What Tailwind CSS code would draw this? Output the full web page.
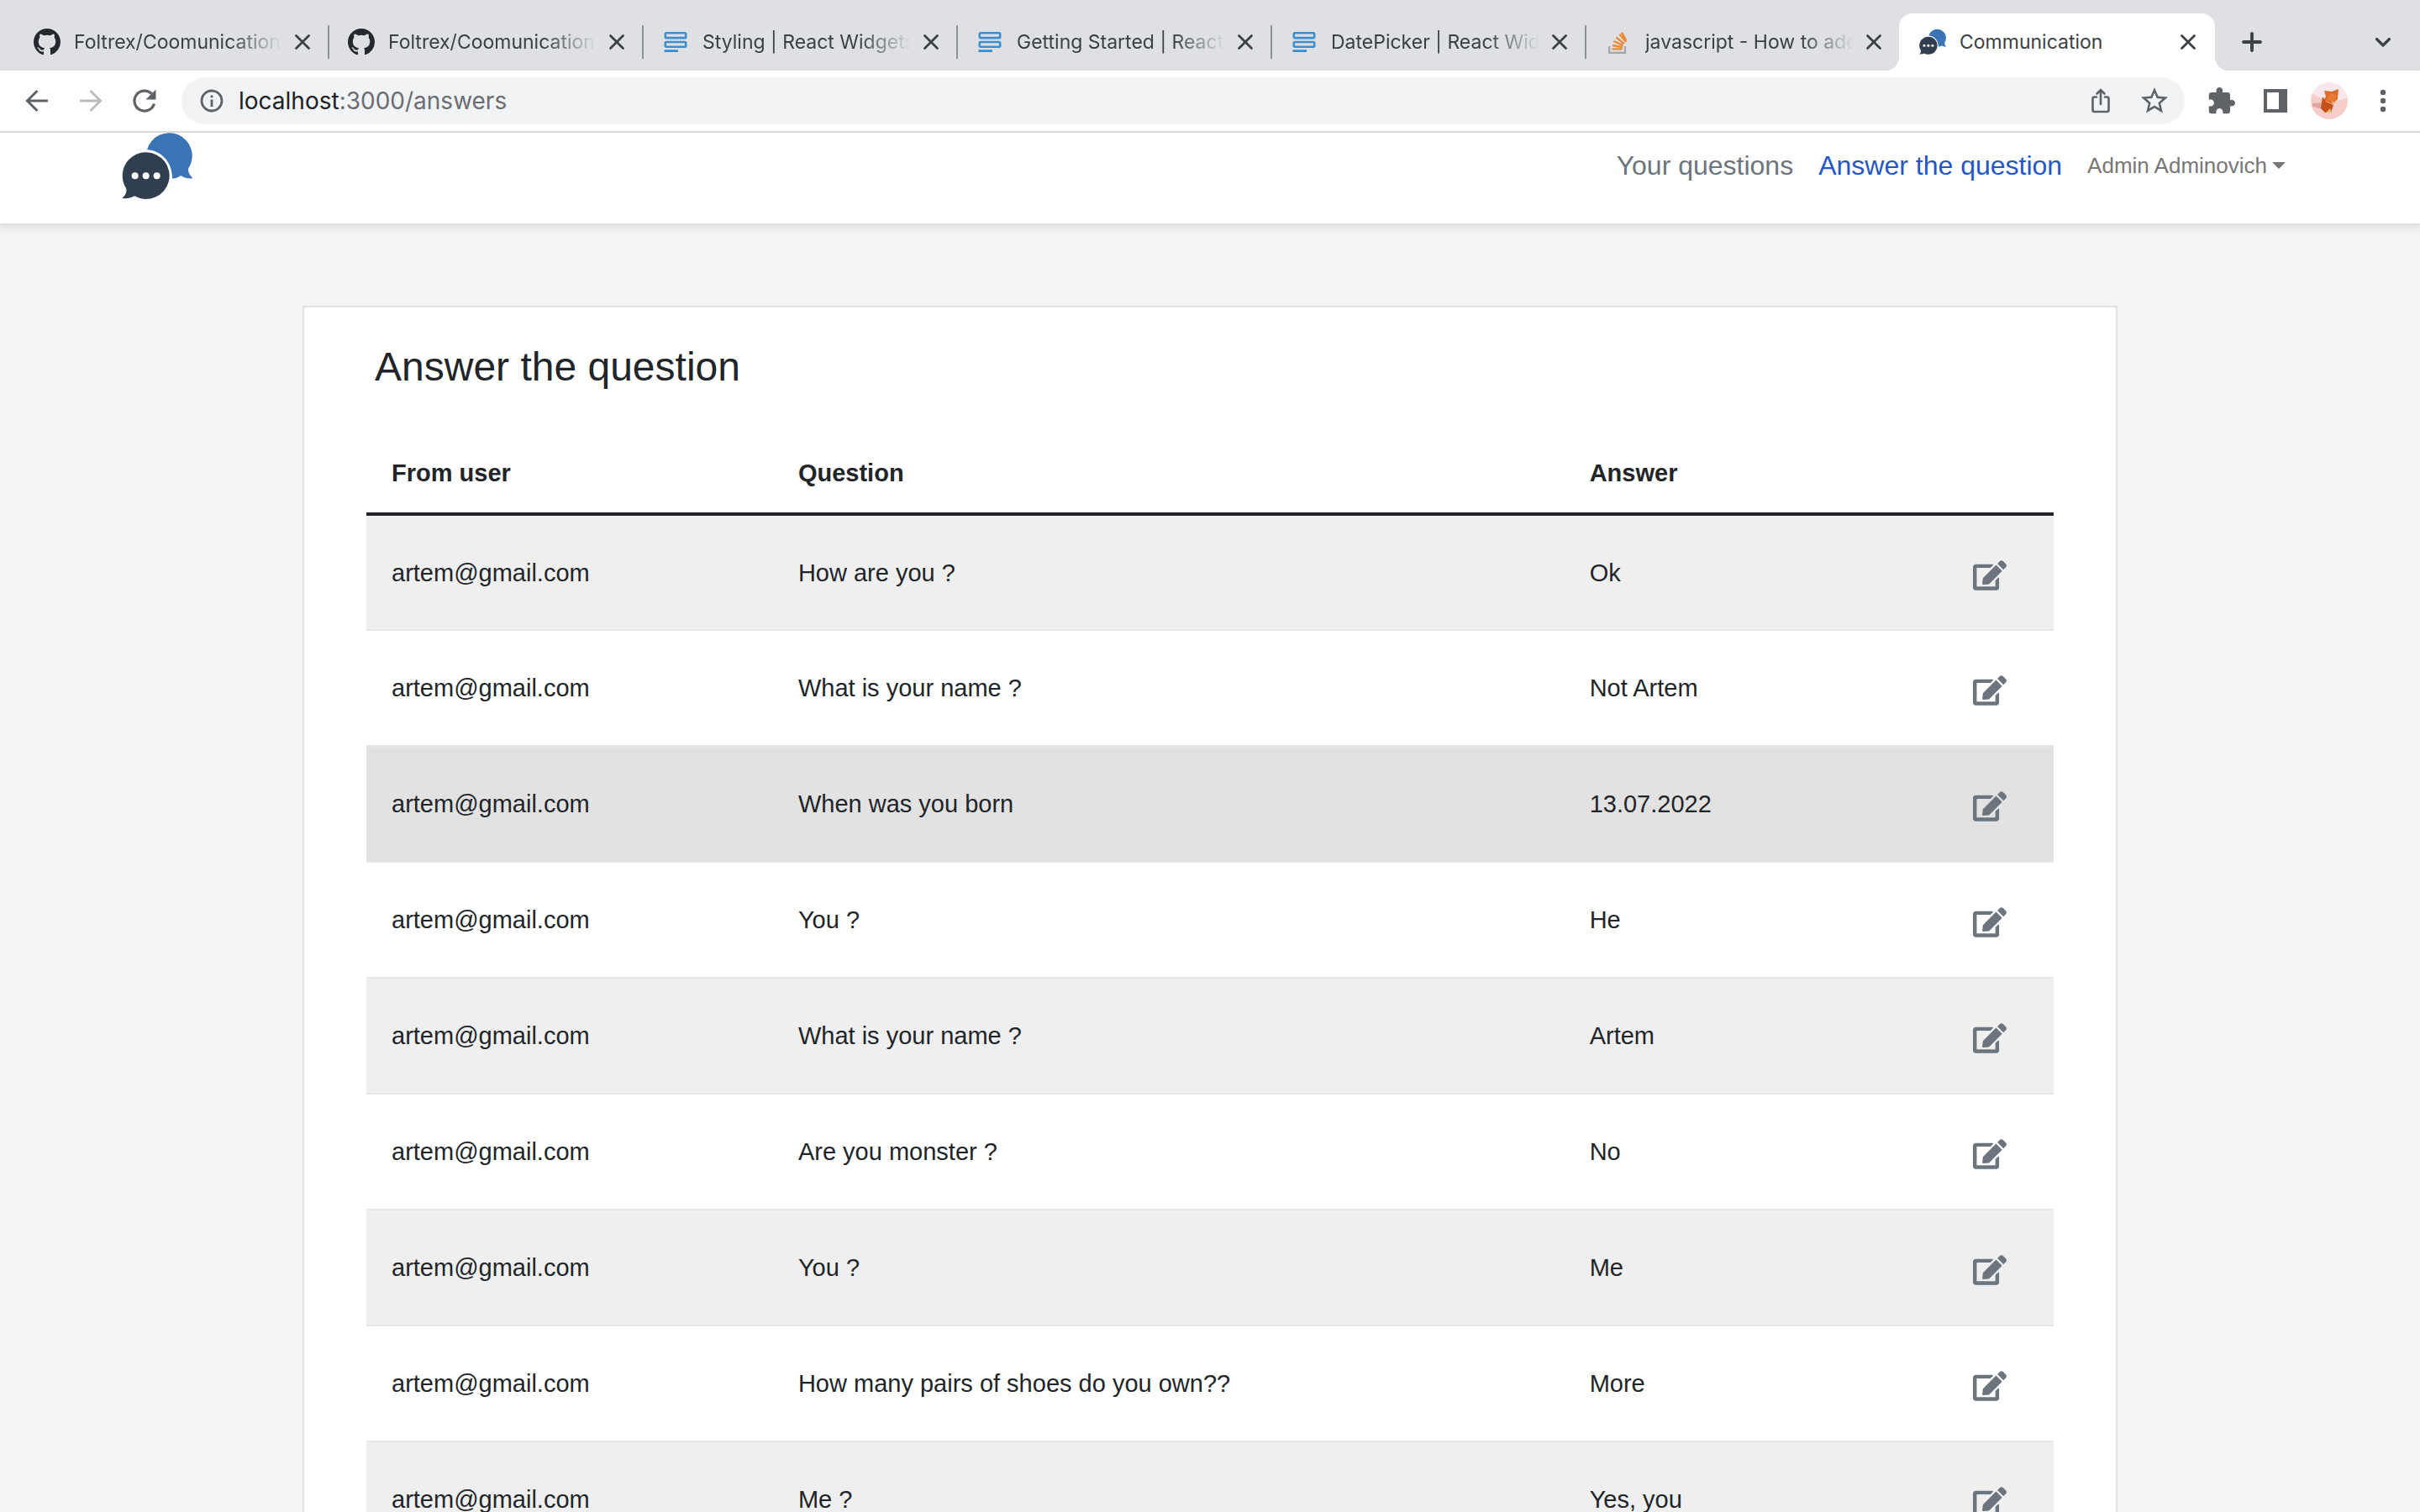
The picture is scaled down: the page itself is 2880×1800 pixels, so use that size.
<!DOCTYPE html>
<html lang="en">
<head>
<meta charset="utf-8">
<title>Communication</title>
<script src="https://cdn.jsdelivr.net/npm/@tailwindcss/browser@4"></script>
</head>
<body class="flex h-screen flex-col overflow-hidden bg-[#f4f4f4] font-['Liberation_Sans',sans-serif] text-[#212529]">

<svg class="hidden" aria-hidden="true">
  <symbol id="github" viewBox="0 0 16 16"><path fill="#24292f" d="M8 0C3.58 0 0 3.58 0 8c0 3.54 2.29 6.53 5.47 7.59.4.07.55-.17.55-.38 0-.19-.01-.82-.01-1.49-2.01.37-2.53-.49-2.69-.94-.09-.23-.48-.94-.82-1.13-.28-.15-.68-.52-.01-.53.63-.01 1.08.58 1.23.82.72 1.21 1.87.87 2.33.66.07-.52.28-.87.51-1.07-1.78-.2-3.64-.89-3.64-3.95 0-.87.31-1.59.82-2.15-.08-.2-.36-1.02.08-2.12 0 0 .67-.21 2.2.82.64-.18 1.32-.27 2-.27s1.36.09 2 .27c1.53-1.04 2.2-.82 2.2-.82.44 1.1.16 1.92.08 2.12.51.56.82 1.27.82 2.15 0 3.07-1.87 3.75-3.65 3.95.29.25.54.73.54 1.48 0 1.07-.01 1.93-.01 2.2 0 .21.15.46.55.38A8.01 8.01 0 0 0 16 8c0-4.42-3.58-8-8-8z"/></symbol>
  <symbol id="widgets" viewBox="0 0 32 32"><g fill="none" stroke="#3f8ecb" stroke-width="2.6"><rect x="3.8" y="5.3" width="24.4" height="5.8" rx="1.2"/><rect x="3.8" y="16" width="24.4" height="5.8" rx="1.2"/></g><path fill="#3f8ecb" d="M2.5 25.2h16.5v2.8H2.500z"/></symbol>
  <symbol id="stack" viewBox="0 0 32 32"><path fill="none" stroke="#a3a6aa" stroke-width="2.2" d="M5.200 21v7.800h18.800V21"/><g stroke="#e98a3a" stroke-width="2.400"><path d="M8.500 24.400h12M9 20l12 2.300M10.500 15l11 5M13.500 10.500l9.300 7.600M17.500 6.700l7.500 9.300M20 4.700l5.500 10"/></g></symbol>
  <symbol id="chat" viewBox="74 23 252 240"><path fill="#3a74b5" d="M164 84A82 82 0 1 1 312 150C309 161 315 174 328 186C312 187 297 185 284 176C274 184 264 187 254 186C255 130 215 86 164 84Z"/><path fill="#313e4f" d="M160 93A83.500 83.500 0 1 1 119 249C106 257 90 259 75 257C88 245 93 233 89 221A83.500 83.500 0 0 1 160 93Z"/><g fill="#fff"><circle cx="121" cy="177" r="12"/><circle cx="160" cy="177" r="12"/><circle cx="199" cy="177" r="12"/></g></symbol>
  <symbol id="close" viewBox="0 0 32 32"><path fill="none" stroke="#3c4043" stroke-width="2.800" stroke-linecap="round" d="M8.500 8.500l15 15m0-15l-15 15"/></symbol>
  <symbol id="edit" viewBox="0 0 576 512"><path fill="#6c757d" d="M402.600 83.200l90.200 90.200c3.800 3.800 3.800 10 0 13.800L274.400 405.600l-92.800 10.300c-12.400 1.400-22.900-9.100-21.500-21.500l10.300-92.800L388.800 83.200c3.800-3.800 10-3.800 13.800 0zm162-22.900l-48.800-48.800c-15.200-15.200-39.900-15.200-55.200 0l-35.400 35.400c-3.800 3.800-3.800 10 0 13.800l90.200 90.200c3.800 3.800 10 3.800 13.800 0l35.400-35.400c15.200-15.300 15.200-40 0-55.200zM384 346.200V448H64V128h229.800c3.200 0 6.200-1.300 8.500-3.500l40-40c7.600-7.600 2.200-20.500-8.500-20.500H48C21.500 64 0 85.500 0 112v352c0 26.500 21.500 48 48 48h352c26.500 0 48-21.500 48-48V306.200c0-10.700-12.900-16-20.500-8.500l-40 40c-2.200 2.300-3.500 5.300-3.500 8.500z"/></symbol>
</svg>

<!-- Tab strip -->
<div class="flex h-[84px] shrink-0 items-end bg-[#dee0e4] pl-4 font-[Inter,sans-serif] text-[23px] leading-8 text-[#3c4043]">
  <div class="flex h-[68px] min-w-0 flex-[0_1_374px] items-center pr-3.5">
    <svg class="ml-6 size-8 shrink-0"><use href="#github"/></svg>
    <span class="ml-4 min-w-0 flex-1 overflow-hidden whitespace-nowrap mask-r-from-75%">Foltrex/Coomunication</span>
    <button class="ml-2 size-8 shrink-0" aria-label="Close tab"><svg class="size-8"><use href="#close"/></svg></button>
  </div>
  <div class="flex h-[68px] min-w-0 flex-[0_1_374px] items-center pr-3.5">
    <span class="h-10 w-0.5 bg-[#8d9094]"></span>
    <svg class="ml-[22px] size-8 shrink-0"><use href="#github"/></svg>
    <span class="ml-4 min-w-0 flex-1 overflow-hidden whitespace-nowrap mask-r-from-75%">Foltrex/Coomunication</span>
    <button class="ml-2 size-8 shrink-0" aria-label="Close tab"><svg class="size-8"><use href="#close"/></svg></button>
  </div>
  <div class="flex h-[68px] min-w-0 flex-[0_1_374px] items-center pr-3.5">
    <span class="h-10 w-0.5 bg-[#8d9094]"></span>
    <svg class="ml-[22px] size-8 shrink-0"><use href="#widgets"/></svg>
    <span class="ml-4 min-w-0 flex-1 overflow-hidden whitespace-nowrap mask-r-from-75%">Styling | React Widgets</span>
    <button class="ml-2 size-8 shrink-0" aria-label="Close tab"><svg class="size-8"><use href="#close"/></svg></button>
  </div>
  <div class="flex h-[68px] min-w-0 flex-[0_1_374px] items-center pr-3.5">
    <span class="h-10 w-0.5 bg-[#8d9094]"></span>
    <svg class="ml-[22px] size-8 shrink-0"><use href="#widgets"/></svg>
    <span class="ml-4 min-w-0 flex-1 overflow-hidden whitespace-nowrap mask-r-from-75%">Getting Started | React</span>
    <button class="ml-2 size-8 shrink-0" aria-label="Close tab"><svg class="size-8"><use href="#close"/></svg></button>
  </div>
  <div class="flex h-[68px] min-w-0 flex-[0_1_374px] items-center pr-3.5">
    <span class="h-10 w-0.5 bg-[#8d9094]"></span>
    <svg class="ml-[22px] size-8 shrink-0"><use href="#widgets"/></svg>
    <span class="ml-4 min-w-0 flex-1 overflow-hidden whitespace-nowrap mask-r-from-75%">DatePicker | React Widgets</span>
    <button class="ml-2 size-8 shrink-0" aria-label="Close tab"><svg class="size-8"><use href="#close"/></svg></button>
  </div>
  <div class="flex h-[68px] min-w-0 flex-[0_1_374px] items-center pr-3.5">
    <span class="h-10 w-0.5 bg-[#8d9094]"></span>
    <svg class="ml-[22px] size-8 shrink-0"><use href="#stack"/></svg>
    <span class="ml-4 min-w-0 flex-1 overflow-hidden whitespace-nowrap mask-r-from-75%">javascript - How to add</span>
    <button class="ml-2 size-8 shrink-0" aria-label="Close tab"><svg class="size-8"><use href="#close"/></svg></button>
  </div>
  <div class="relative flex h-[68px] min-w-0 flex-[0_1_376px] items-center rounded-t-2xl bg-white pr-4">
    <span class="absolute bottom-0 -left-4 size-4 bg-[radial-gradient(circle_at_0_0,transparent_16px,#fff_16px)]"></span>
    <span class="absolute -right-4 bottom-0 size-4 bg-[radial-gradient(circle_at_100%_0,transparent_16px,#fff_16px)]"></span>
    <svg class="ml-6 size-8 shrink-0"><use href="#chat"/></svg>
    <span class="ml-4 min-w-0 flex-1 overflow-hidden whitespace-nowrap">Communication</span>
    <button class="ml-2 size-8 shrink-0" aria-label="Close tab"><svg class="size-8"><use href="#close"/></svg></button>
  </div>
  <button class="mb-[18px] ml-7 size-8 shrink-0" aria-label="New tab"><svg class="size-8" viewBox="0 0 32 32"><path stroke="#3c4043" stroke-width="3.800" stroke-linecap="round" d="M16 6v20M6 16h20"/></svg></button>
  <button class="mr-7 mb-[18px] ml-auto size-8 shrink-0" aria-label="Search tabs"><svg class="size-8" viewBox="0 0 32 32"><path fill="none" stroke="#3c4043" stroke-width="3.200" stroke-linecap="round" stroke-linejoin="round" d="M8.500 12.500L16 20l7.500-7.500"/></svg></button>
</div>

<!-- Toolbar -->
<div class="flex h-[74px] shrink-0 items-center border-b-2 border-[#dadbdd] bg-white pr-7 pl-7">
  <div class="flex gap-8">
    <button class="size-8" aria-label="Back"><svg class="size-8" viewBox="0 0 32 32"><path fill="none" stroke="#5f6368" stroke-width="3" d="M29 16H5M16.500 4L4.500 16l12 12"/></svg></button>
    <button class="size-8" aria-label="Forward"><svg class="size-8" viewBox="0 0 32 32"><path fill="none" stroke="#babcbe" stroke-width="3" d="M3 16h24M15.500 4l12 12-12 12"/></svg></button>
    <button class="size-8" aria-label="Reload"><svg class="size-8" viewBox="0 0 32 32"><path fill="none" stroke="#5f6368" stroke-width="3.200" d="M27.500 19.500A12 12 0 1 1 24.500 7.600"/><path fill="#5f6368" d="M29.500 2.500v12h-12z"/></svg></button>
  </div>
  <div class="ml-7 flex h-14 min-w-0 flex-1 items-center rounded-full bg-[#f1f3f4] pr-5 pl-5">
    <svg class="size-8 shrink-0" viewBox="0 0 32 32"><circle cx="16" cy="16" r="12" fill="none" stroke="#5f6368" stroke-width="2.800"/><path fill="#5f6368" d="M14.600 14.500h2.800V23h-2.800zM14.600 9.500h2.800v2.800h-2.800z"/></svg>
    <a href="#" class="ml-4 flex-1 font-[Inter,sans-serif] text-[28px] leading-10 text-[#6a6d71]"><span class="text-[#202124]">localhost</span>:3000/answers</a>
    <button class="size-8" aria-label="Share"><svg class="size-8" viewBox="0 0 32 32"><path fill="none" stroke="#5f6368" stroke-width="2.600" stroke-linecap="round" d="M11 11.500H8.500a2 2 0 0 0-2 2V27a2 2 0 0 0 2 2h15a2 2 0 0 0 2-2V13.500a2 2 0 0 0-2-2H21M16 20V4M11.500 7.500L16 3l4.500 4.500"/></svg></button>
    <button class="ml-8 size-8" aria-label="Bookmark"><svg class="size-8" viewBox="2 2 20 20"><path fill="#5f6368" d="M22 9.240l-7.190-.62L12 2 9.190 8.630 2 9.240l5.460 4.730L5.820 21 12 17.270 18.180 21l-1.630-7.030L22 9.240zM12 15.400l-3.760 2.270 1-4.280-3.320-2.880 4.380-.38L12 6.100l1.710 4.040 4.380.38-3.320 2.880 1 4.280L12 15.400z"/></svg></button>
  </div>
  <button class="ml-7 size-8" aria-label="Extensions"><svg class="size-8" viewBox="1.500 1 21.500 21.500"><path fill="#5f6368" d="M20.500 11H19V7c0-1.100-.9-2-2-2h-4V3.500C13 2.120 11.880 1 10.500 1S8 2.120 8 3.500V5H4c-1.100 0-1.990.9-1.990 2v3.800H3.500c1.490 0 2.700 1.210 2.700 2.700s-1.210 2.700-2.700 2.700H2V20c0 1.100.9 2 2 2h3.800v-1.500c0-1.490 1.210-2.700 2.700-2.700 1.490 0 2.700 1.210 2.700 2.700V22H17c1.100 0 2-.9 2-2v-4h1.500c1.380 0 2.500-1.120 2.500-2.500S21.880 11 20.500 11z"/></svg></button>
  <button class="ml-8 size-8" aria-label="Side panel"><svg class="size-8" viewBox="0 0 32 32"><path fill="#5f6368" fill-rule="evenodd" d="M2 2h28v28H2zM6 6v20h14V6z"/></svg></button>
  <button class="ml-[26px] size-11" aria-label="Profile"><svg class="size-11" viewBox="0 0 44 44"><defs><clipPath id="face"><circle cx="22" cy="22" r="22"/></clipPath></defs><g clip-path="url(#face)"><path fill="#f7e6ea" d="M0 0h44v44H0z"/><path fill="#f6cdc8" d="M0 13l17 8 10 3 17-6v26H0z"/><path fill="#dfa6a1" d="M2 25l12-1v8L2 29z"/><path fill="#dc6a28" d="M16 10l9 1 8-3-1 12-6 6-11-5 3-4z"/><path fill="#c4501c" d="M14 17l4 6 9 4-3 9-7 0-5-5z"/><path fill="#e57b35" d="M18 21l9 3 5-8-8-3z"/><path fill="#e2bd71" d="M18 36l5-5 2 5zM25 23l3 0-2 4z"/></g></svg></button>
  <button class="ml-[26px] size-8" aria-label="Menu"><svg class="size-8" viewBox="0 0 32 32"><g fill="#5f6368"><circle cx="16" cy="6" r="3.200"/><circle cx="16" cy="16" r="3.200"/><circle cx="16" cy="26" r="3.200"/></g></svg></button>
</div>

<!-- Site header -->
<header class="flex h-[110px] shrink-0 items-start justify-between border-b-2 border-[#dee2e6] bg-white px-[5%] shadow-[0_4px_8px_rgba(0,0,0,0.075)]">
  <a href="#" class="pl-px" aria-label="Home"><svg class="h-20 w-[84px]"><use href="#chat"/></svg></a>
  <nav class="flex items-center gap-[30px] pt-[15px] pr-4 text-[32px] leading-[48px] whitespace-nowrap">
    <a href="#" class="text-[#6c757d]">Your questions</a>
    <a href="#" class="text-[#2457c5]">Answer the question</a>
    <button class="flex items-center gap-1.5 text-[26px] text-[#777]">Admin Adminovich<svg class="h-2 w-4" viewBox="0 0 16 8"><path fill="#777" d="M0 0h16L8 8z"/></svg></button>
  </nav>
</header>

<main class="mx-auto mt-24 w-3/4 grow border-2 border-[#dee2e6] bg-white px-[74px] pt-[42px]">
  <h1 class="pl-2.5 text-[48px] leading-[58px]">Answer the question</h1>
  <table class="mt-[50px] w-full table-fixed border-collapse text-left text-[29px] leading-[44px]">
    <colgroup><col class="w-[24.1%]"><col class="w-[46.9%]"><col class="w-[21%]"><col class="w-[8%]"></colgroup>
    <thead>
      <tr class="h-24 border-b-4 border-[#212529]"><th class="px-[30px]">From user</th><th class="px-[30px]">Question</th><th class="px-[30px]">Answer</th><th></th></tr>
    </thead>
    <tbody>
      <tr class="h-[138px] border-b-2 border-[#e7e7e7] bg-[#efefef]"><td class="px-[30px]">artem@gmail.com</td><td class="px-[30px]">How are you ?</td><td class="px-[30px]">Ok</td><td class="pr-14"><button class="ml-auto block pt-1.5" aria-label="Edit"><svg class="h-9 w-10"><use href="#edit"/></svg></button></td></tr>
      <tr class="h-[138px] border-b-2 border-[#e7e7e7]"><td class="px-[30px]">artem@gmail.com</td><td class="px-[30px]">What is your name ?</td><td class="px-[30px]">Not Artem</td><td class="pr-14"><button class="ml-auto block pt-1.5" aria-label="Edit"><svg class="h-9 w-10"><use href="#edit"/></svg></button></td></tr>
      <tr class="h-[138px] border-b-2 border-[#e7e7e7] bg-[#e2e2e2]"><td class="px-[30px]">artem@gmail.com</td><td class="px-[30px]">When was you born</td><td class="px-[30px]">13.07.2022</td><td class="pr-14"><button class="ml-auto block pt-1.5" aria-label="Edit"><svg class="h-9 w-10"><use href="#edit"/></svg></button></td></tr>
      <tr class="h-[138px] border-b-2 border-[#e7e7e7]"><td class="px-[30px]">artem@gmail.com</td><td class="px-[30px]">You ?</td><td class="px-[30px]">He</td><td class="pr-14"><button class="ml-auto block pt-1.5" aria-label="Edit"><svg class="h-9 w-10"><use href="#edit"/></svg></button></td></tr>
      <tr class="h-[138px] border-b-2 border-[#e7e7e7] bg-[#efefef]"><td class="px-[30px]">artem@gmail.com</td><td class="px-[30px]">What is your name ?</td><td class="px-[30px]">Artem</td><td class="pr-14"><button class="ml-auto block pt-1.5" aria-label="Edit"><svg class="h-9 w-10"><use href="#edit"/></svg></button></td></tr>
      <tr class="h-[138px] border-b-2 border-[#e7e7e7]"><td class="px-[30px]">artem@gmail.com</td><td class="px-[30px]">Are you monster ?</td><td class="px-[30px]">No</td><td class="pr-14"><button class="ml-auto block pt-1.5" aria-label="Edit"><svg class="h-9 w-10"><use href="#edit"/></svg></button></td></tr>
      <tr class="h-[138px] border-b-2 border-[#e7e7e7] bg-[#efefef]"><td class="px-[30px]">artem@gmail.com</td><td class="px-[30px]">You ?</td><td class="px-[30px]">Me</td><td class="pr-14"><button class="ml-auto block pt-1.5" aria-label="Edit"><svg class="h-9 w-10"><use href="#edit"/></svg></button></td></tr>
      <tr class="h-[138px] border-b-2 border-[#e7e7e7]"><td class="px-[30px]">artem@gmail.com</td><td class="px-[30px]">How many pairs of shoes do you own??</td><td class="px-[30px]">More</td><td class="pr-14"><button class="ml-auto block pt-1.5" aria-label="Edit"><svg class="h-9 w-10"><use href="#edit"/></svg></button></td></tr>
      <tr class="h-[138px] border-b-2 border-[#e7e7e7] bg-[#efefef]"><td class="px-[30px]">artem@gmail.com</td><td class="px-[30px]">Me ?</td><td class="px-[30px]">Yes, you</td><td class="pr-14"><button class="ml-auto block pt-1.5" aria-label="Edit"><svg class="h-9 w-10"><use href="#edit"/></svg></button></td></tr>
    </tbody>
  </table>
</main>
</body>
</html>
